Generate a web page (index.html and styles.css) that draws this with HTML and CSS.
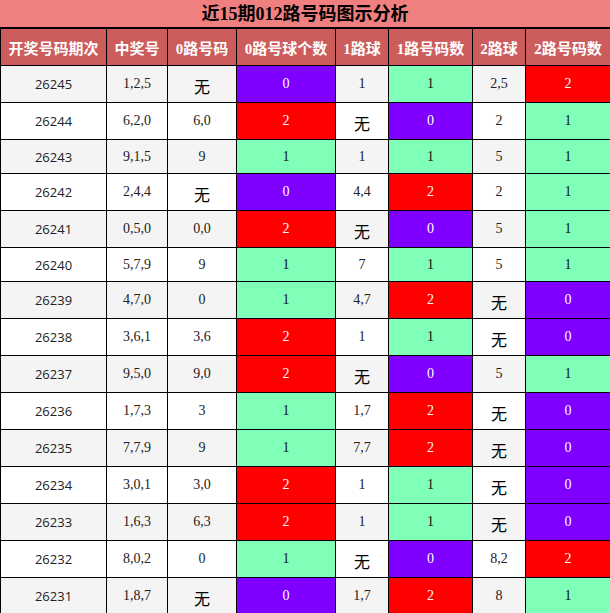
FILE: index.html
```html
<!DOCTYPE html>
<html>
<head>
<meta charset="utf-8">
<link rel="stylesheet" href="styles.css">
</head>
<body>
<div class="wrap">
<div class="title">近15期012路号码图示分析</div>
<table class="grid">
<colgroup>
<col class="w1"><col class="w2"><col class="w3"><col class="w4"><col class="w5"><col class="w6"><col class="w7"><col class="w8">
</colgroup>
<thead>
<tr><th>开奖号码期次</th><th>中奖号</th><th>0路号码</th><th>0路号球个数</th><th>1路球</th><th>1路号码数</th><th>2路球</th><th>2路号码数</th></tr>
</thead>
<tbody>
<tr class="alt tall"><td class="id">26245</td><td>1,2,5</td><td><span class="wu">无</span></td><td class="c0">0</td><td>1</td><td class="c1">1</td><td>2,5</td><td class="c2">2</td></tr>
<tr class="tall"><td class="id">26244</td><td>6,2,0</td><td>6,0</td><td class="c2">2</td><td><span class="wu">无</span></td><td class="c0">0</td><td>2</td><td class="c1">1</td></tr>
<tr class="alt"><td class="id">26243</td><td>9,1,5</td><td>9</td><td class="c1">1</td><td>1</td><td class="c1">1</td><td>5</td><td class="c1">1</td></tr>
<tr class="tall"><td class="id">26242</td><td>2,4,4</td><td><span class="wu">无</span></td><td class="c0">0</td><td>4,4</td><td class="c2">2</td><td>2</td><td class="c1">1</td></tr>
<tr class="alt tall"><td class="id">26241</td><td>0,5,0</td><td>0,0</td><td class="c2">2</td><td><span class="wu">无</span></td><td class="c0">0</td><td>5</td><td class="c1">1</td></tr>
<tr><td class="id">26240</td><td>5,7,9</td><td>9</td><td class="c1">1</td><td>7</td><td class="c1">1</td><td>5</td><td class="c1">1</td></tr>
<tr class="alt tall"><td class="id">26239</td><td>4,7,0</td><td>0</td><td class="c1">1</td><td>4,7</td><td class="c2">2</td><td><span class="wu">无</span></td><td class="c0">0</td></tr>
<tr class="tall"><td class="id">26238</td><td>3,6,1</td><td>3,6</td><td class="c2">2</td><td>1</td><td class="c1">1</td><td><span class="wu">无</span></td><td class="c0">0</td></tr>
<tr class="alt tall"><td class="id">26237</td><td>9,5,0</td><td>9,0</td><td class="c2">2</td><td><span class="wu">无</span></td><td class="c0">0</td><td>5</td><td class="c1">1</td></tr>
<tr class="tall"><td class="id">26236</td><td>1,7,3</td><td>3</td><td class="c1">1</td><td>1,7</td><td class="c2">2</td><td><span class="wu">无</span></td><td class="c0">0</td></tr>
<tr class="alt tall"><td class="id">26235</td><td>7,7,9</td><td>9</td><td class="c1">1</td><td>7,7</td><td class="c2">2</td><td><span class="wu">无</span></td><td class="c0">0</td></tr>
<tr class="tall"><td class="id">26234</td><td>3,0,1</td><td>3,0</td><td class="c2">2</td><td>1</td><td class="c1">1</td><td><span class="wu">无</span></td><td class="c0">0</td></tr>
<tr class="alt tall"><td class="id">26233</td><td>1,6,3</td><td>6,3</td><td class="c2">2</td><td>1</td><td class="c1">1</td><td><span class="wu">无</span></td><td class="c0">0</td></tr>
<tr class="tall"><td class="id">26232</td><td>8,0,2</td><td>0</td><td class="c1">1</td><td><span class="wu">无</span></td><td class="c0">0</td><td>8,2</td><td class="c2">2</td></tr>
<tr class="alt tall"><td class="id">26231</td><td>1,8,7</td><td><span class="wu">无</span></td><td class="c0">0</td><td>1,7</td><td class="c2">2</td><td>8</td><td class="c1">1</td></tr>
</tbody>
</table>
</div>
</body>
</html>
```

FILE: styles.css
```css
html, body {
  margin: 0;
  padding: 0;
  background: #ffffff;
}
.wrap {
  width: 610px;
}
.title {
  height: 27px;
  line-height: 28px;
  background: #f08080;
  border-bottom: 2px solid #000;
  text-align: center;
  font-family: "Liberation Serif", "Noto Sans CJK SC", serif;
  font-weight: bold;
  font-size: 18px;
  color: #000;
}
.grid {
  width: 610px;
  table-layout: fixed;
  border-collapse: collapse;
  border-left: 1px solid #000;
  border-right: 1px solid #000;
}
.w1 { width: 106px; }
.w2 { width: 61px; }
.w3 { width: 69px; }
.w4 { width: 99px; }
.w5 { width: 53px; }
.w6 { width: 84px; }
.w7 { width: 53px; }
.w8 { width: 85px; }
.grid th {
  background: #cd5c5c;
  color: #fff;
  font-family: "Liberation Serif", "Noto Sans CJK SC", serif;
  font-weight: bold;
  font-size: 15px;
  height: 36px;
  padding: 0;
  border: 1px solid #000;
  border-top: none;
  text-align: center;
  white-space: nowrap;
}
.grid td {
  border: 1px solid #000;
  padding: 0;
  height: 33px;
  text-align: center;
  font-family: "Liberation Serif", "Noto Sans CJK SC", serif;
  font-size: 14px;
  color: #222;
  background: #fff;
}
.grid tr.tall td {
  height: 36px;
}
.grid tr.alt td {
  background: #f4f4f4;
}
.grid td.id {
  font-family: "Open Sans", "Liberation Sans", sans-serif;
  font-size: 13px;
  color: #222;
}
.wu {
  font-family: "Noto Sans CJK SC", sans-serif;
  font-size: 16px;
  color: #000;
  position: relative;
  top: 2px;
}
.grid tr td.c0 {
  background: #8000ff;
  color: #fff;
}
.grid tr td.c1 {
  background: #80ffb8;
  color: #111;
}
.grid tr td.c2 {
  background: #ff0000;
  color: #fff;
}
```
